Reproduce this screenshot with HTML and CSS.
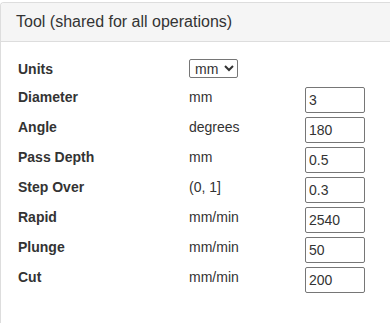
FILE: index.html
```html
<!DOCTYPE html>
<html lang="en">

<head>
  <meta charset="utf-8" />
  <title>Tool</title>
  <link rel="stylesheet" href="styles.css">
</head>

<body>
  <div class="panel">
    <div class="panel-heading">Tool (shared for all operations)</div>
    <div class="panel-body">
      <div class="tool-grid">
        <label class="name">Units</label>
        <div class="unit">
          <select class="unit-select">
            <option selected>mm</option>
            <option>inch</option>
          </select>
        </div>
        <div></div>

        <label class="name">Diameter</label>
        <span class="unit">mm</span>
        <input class="num" type="text" value="3" />

        <label class="name">Angle</label>
        <span class="unit">degrees</span>
        <input class="num" type="text" value="180" />

        <label class="name">Pass Depth</label>
        <span class="unit">mm</span>
        <input class="num" type="text" value="0.5" />

        <label class="name">Step Over</label>
        <span class="unit">(0, 1]</span>
        <input class="num" type="text" value="0.3" />

        <label class="name">Rapid</label>
        <span class="unit">mm/min</span>
        <input class="num" type="text" value="2540" />

        <label class="name">Plunge</label>
        <span class="unit">mm/min</span>
        <input class="num" type="text" value="50" />

        <label class="name">Cut</label>
        <span class="unit">mm/min</span>
        <input class="num" type="text" value="200" />
      </div>
    </div>
  </div>
</body>

</html>
```

FILE: styles.css
```css
*{box-sizing:border-box;}
html,body{height:100%;}
body{margin:0;overflow:hidden;background:#fff;font-family:"Liberation Sans",Arial,sans-serif;font-size:14px;line-height:20px;color:#333;}

/* panel is cut by the window on the right and at the bottom */
.panel{margin-top:2px;height:calc(100% - 2px);border:solid #ddd;border-width:1px 0 0 1px;border-radius:4px 0 0 0;background:#fff;}
.panel-heading{padding:10px 15px;font-size:16px;line-height:17.6px;color:#333;background:#f5f5f5;border-bottom:1px solid #ddd;border-radius:3px 0 0 0;}
.panel-body{padding:17px 15px 15px 17px;}

.tool-grid{display:grid;grid-template-columns:171px 116px 60px;grid-template-rows:28px;grid-auto-rows:30px;align-items:start;}
.name{font-weight:bold;}

.unit-select{display:block;height:19px;margin:0;padding:0 0 0 1px;font-family:"Liberation Sans",Arial,sans-serif;font-size:14px;color:#333;border:1px solid #767676;border-radius:2px;background:#fff;}
.num{display:block;width:60px;height:26px;margin:0;padding:0 3px;font-family:"Liberation Sans",Arial,sans-serif;font-size:14px;color:#333;border:1px solid #767676;border-radius:2px;background:#fff;}
```
